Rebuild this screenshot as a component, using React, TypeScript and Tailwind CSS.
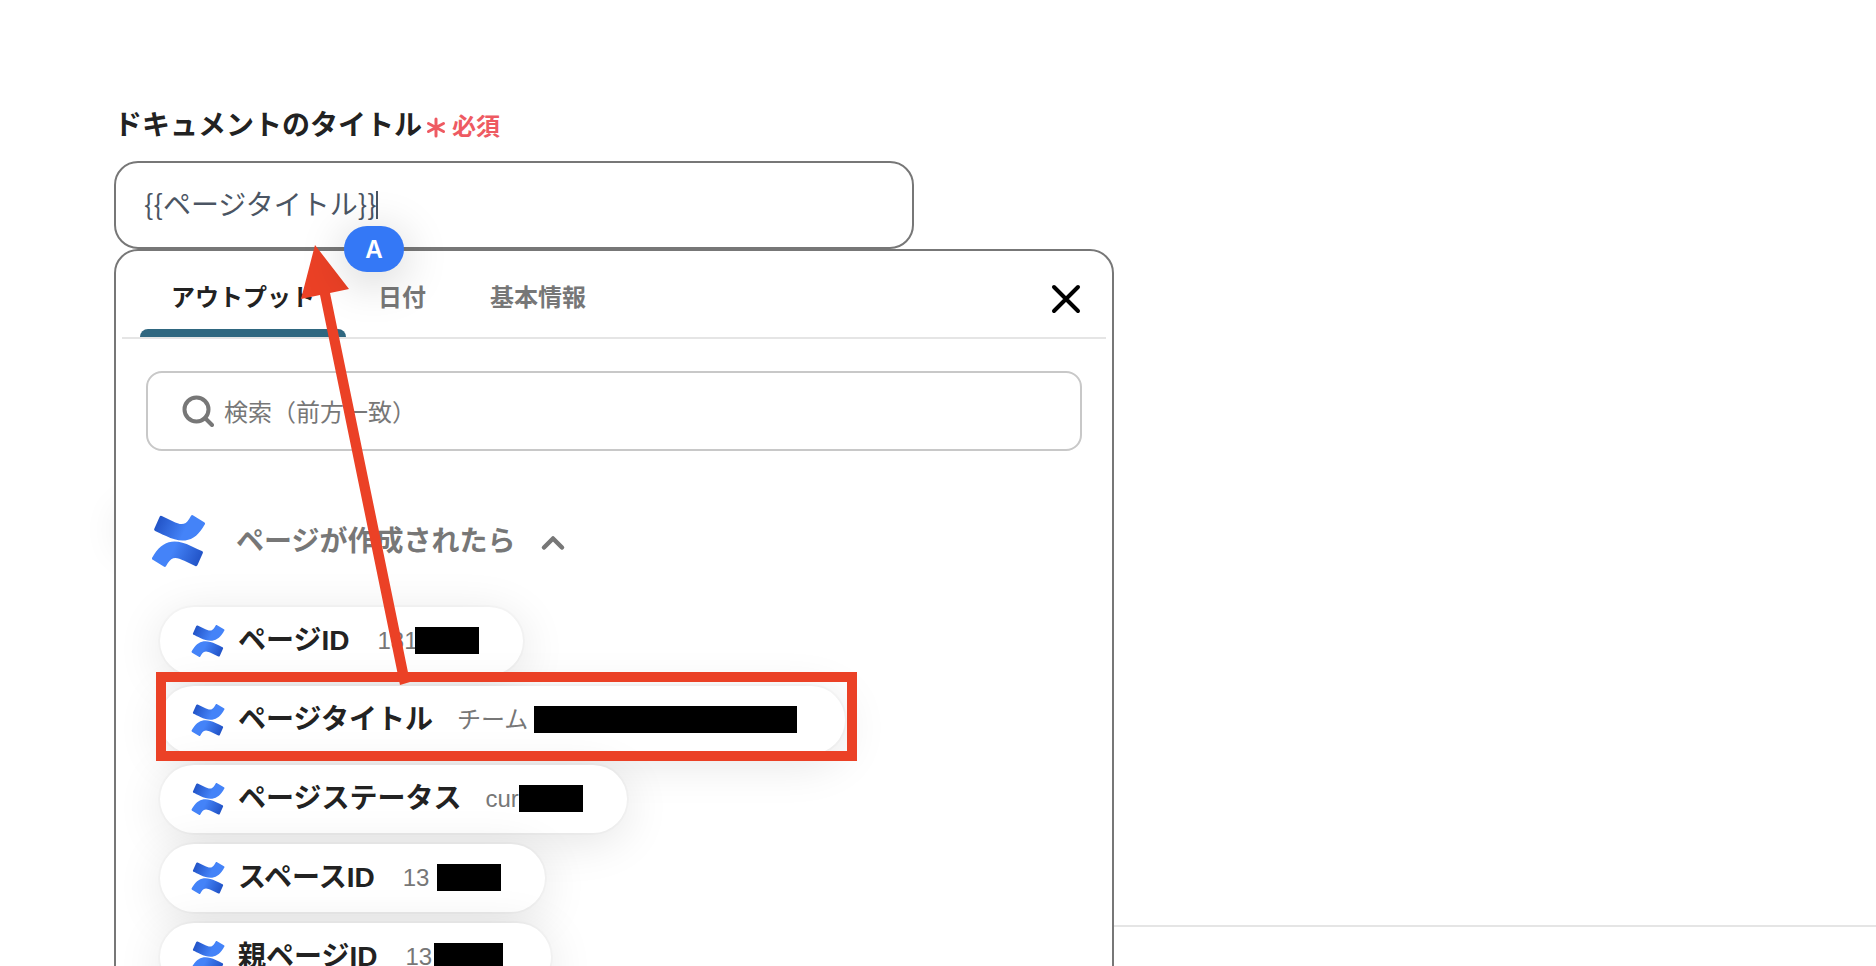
import { ChevronUp } from 'lucide-react';

const tabs = [
  { label: 'アウトプット', active: true },
  { label: '日付', active: false },
  { label: '基本情報', active: false },
];

const outputs = [
  { name: 'ページID', value: '131', pill: 'pr-11', field: 'ml-7 w-[102px]', mask: 'w-16' },
  { name: 'ページタイトル', value: 'チーム', pill: 'pr-12', field: 'ml-6 w-[340px]', mask: 'w-[263px]' },
  { name: 'ページステータス', value: 'cur', pill: 'pr-11', field: 'ml-6 w-[98px]', mask: 'w-16' },
  { name: 'スペースID', value: '13', pill: 'pr-11', field: 'ml-7 w-[98px]', mask: 'w-16' },
  { name: '親ページID', value: '13', pill: 'pr-12', field: 'ml-7 w-[98px]', mask: 'w-[69px]' },
];

function ConfluenceLogo({ className }: { className: string }) {
  return (
    <svg viewBox="0 0.3 24 23.4" className={className} aria-hidden="true">
      <defs>
        <linearGradient id="cf-top" x1="1" y1="3" x2="14" y2="9" gradientUnits="userSpaceOnUse">
          <stop offset="0" stopColor="#1f4fc2" />
          <stop offset="1" stopColor="#4483f8" />
        </linearGradient>
        <linearGradient id="cf-bottom" x1="23" y1="21" x2="10" y2="15" gradientUnits="userSpaceOnUse">
          <stop offset="0" stopColor="#1f4fc2" />
          <stop offset="1" stopColor="#4483f8" />
        </linearGradient>
      </defs>
      <path
        fill="url(#cf-bottom)"
        d="M.87 18.257c-.248.382-.53.875-.763 1.245a.764.764 0 0 0 .255 1.04l4.965 3.054a.764.764 0 0 0 1.058-.26c.199-.332.454-.763.733-1.221 1.967-3.247 3.945-2.853 7.508-1.146l4.957 2.337a.764.764 0 0 0 1.028-.382l2.364-5.346a.764.764 0 0 0-.382-1 599.851 599.851 0 0 1-4.965-2.361C10.911 10.97 5.224 11.185.87 18.257z"
      />
      <path
        fill="url(#cf-top)"
        d="M23.131 5.743c.249-.405.531-.875.764-1.25a.764.764 0 0 0-.256-1.034L18.675.404a.764.764 0 0 0-1.058.26c-.195.335-.451.763-.734 1.225-1.966 3.246-3.945 2.85-7.508 1.146L4.437.694a.764.764 0 0 0-1.027.382L1.046 6.422a.764.764 0 0 0 .382 1c1.039.49 3.105 1.467 4.965 2.361 6.698 3.246 12.392 3.029 16.738-4.04z"
      />
    </svg>
  );
}

function SearchBox() {
  return (
    <div className="mx-[30px] mt-8 flex h-20 items-center gap-2.5 rounded-2xl border-2 border-[#c8c8c8] pl-[34px] pr-6">
      <svg viewBox="0 0 32 32" className="size-8 shrink-0" fill="none" stroke="#777" strokeWidth="4" aria-hidden="true">
        <circle cx="14.5" cy="14.5" r="12" />
        <path d="M23 23 30 30" strokeLinecap="round" />
      </svg>
      <input
        type="text"
        aria-label="検索"
        placeholder="検索（前方一致）"
        className="h-10 min-w-0 flex-1 bg-transparent pb-0.5 text-2xl text-[#777] outline-none placeholder:text-[#777]"
      />
    </div>
  );
}

function OutputPanel() {
  return (
    <section className="relative max-w-[1000px] rounded-3xl border-2 border-[#777] bg-white pb-10">
      <div className="mx-1.5 flex items-center justify-between border-b-2 border-[#e5e5e5] pl-[18px] pr-6">
        <div className="flex">
          {tabs.map((tab) => (
            <button
              key={tab.label}
              type="button"
              className={
                tab.active
                  ? 'relative h-[86px] px-[31px] pb-1 pt-2 text-2xl font-bold text-[#222]'
                  : 'relative h-[86px] px-8 pb-1 pt-2 text-2xl font-bold text-[#777]'
              }
            >
              {tab.label}
              {tab.active && <span className="absolute inset-x-0 bottom-0 h-2 rounded-t-lg bg-[#2f6780]" />}
            </button>
          ))}
        </div>
        <button type="button" aria-label="閉じる" className="pt-2.5">
          <svg viewBox="0 0 32 32" className="size-8" stroke="#000" strokeWidth="4" strokeLinecap="round" aria-hidden="true">
            <path d="M4 4 28 28M28 4 4 28" />
          </svg>
        </button>
      </div>

      <SearchBox />

      <button type="button" className="ml-9 mt-16 flex h-[52px] items-center text-[28px] font-bold text-[#777]">
        <ConfluenceLogo className="h-[52px] w-[53px]" />
        <span className="ml-[31px] pb-1">ページが作成されたら</span>
        <ChevronUp className="ml-5 mt-1 size-9" strokeWidth={3} />
      </button>

      <ul className="ml-11 mt-10 flex flex-col items-start gap-[11px]">
        {outputs.map((item) => (
          <li key={item.name}>
            <button
              type="button"
              className={`flex h-[68px] items-center rounded-full bg-white pl-[31px] font-['Liberation_Sans','Noto_Sans_CJK_JP',sans-serif] shadow-[0_0_0_2px_rgba(0,0,0,0.02),0_8px_48px_rgba(0,0,0,0.11)] ${item.pill}`}
            >
              <ConfluenceLogo className="h-8 w-[34px]" />
              <span className="ml-[13px] text-[28px] font-bold text-[#222]">{item.name}</span>
              <span className={`relative text-left text-2xl text-[#777] ${item.field}`}>
                {item.value}
                <span className={`absolute right-0 top-0.5 h-[27px] bg-black ${item.mask}`} />
              </span>
            </button>
          </li>
        ))}
      </ul>
    </section>
  );
}

// Red frame and arrow that point out which output goes into the title field
function Annotations() {
  return (
    <>
      <div className="pointer-events-none absolute left-[156px] top-[672px] h-[89px] w-[701px] border-[10px] border-[#eb4126]" />
      <svg
        className="pointer-events-none absolute left-[300px] top-[245px] h-[440px] w-[112px]"
        viewBox="300 245 112 440"
        fill="#eb4126"
        aria-hidden="true"
      >
        <path d="M315 245 349 289 330 293 410 682 400 685 320 295 301 299Z" />
      </svg>
    </>
  );
}

export default function App() {
  return (
    <main className="relative h-screen overflow-hidden bg-white font-['Noto_Sans_CJK_JP',sans-serif]">
      <hr className="absolute left-[114px] right-0 top-[925px] border-t-2 border-[#e5e5e5]" />
      <div className="absolute left-[120px] top-[510px] h-10 w-40 rounded-full shadow-[0_0_40px_rgba(0,0,0,0.12)]" />
      <div className="relative px-[114px] pt-[103px]">
        <label htmlFor="doc-title" className="flex h-[58px] items-start gap-0.5 leading-10">
          <span className="text-[28px] font-bold text-[#222]">ドキュメントのタイトル</span>
          <span className="flex gap-1 text-2xl font-bold leading-[44px] text-[#ee5a62]">
            <svg viewBox="0 0 24 24" className="mt-3 size-6" stroke="currentColor" strokeWidth="3" strokeLinecap="round" aria-hidden="true">
              <path d="M12 4v17M4.5 8.5l15 8M19.5 8.5l-15 8" />
            </svg>
            必須
          </span>
        </label>
        <div className="relative h-[88px] max-w-[800px]">
          <input
            id="doc-title"
            type="text"
            defaultValue="{{ページタイトル}}"
            className="size-full rounded-3xl border-2 border-[#777] px-7 pb-1 text-[28px] text-[#4b5563] outline-none"
          />
          <span className="absolute left-[262px] top-[30px] h-7 w-0.5 bg-[#4b5563]" />
          <span className="absolute left-[230px] top-[65px] z-10 flex h-[46px] w-[60px] items-center justify-center rounded-[23px] bg-[#3478f6] pt-0.5 font-['Inter',sans-serif] text-2xl font-semibold text-white shadow-[0_8px_48px_rgba(0,0,0,0.2)]">
            A
          </span>
        </div>
        <OutputPanel />
      </div>
      <Annotations />
    </main>
  );
}
